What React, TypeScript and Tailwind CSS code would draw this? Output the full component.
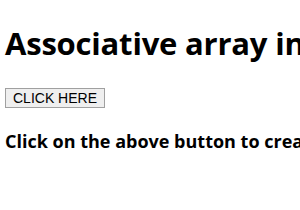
import React from 'react';

const App: React.FC = () => {
  return (
    <div className="min-h-screen w-[300px] overflow-hidden bg-white px-[5px] pt-[22px] text-black" style={{ fontFamily: '"Open Sans", "Noto Sans", sans-serif' }}>
      <h1 className="whitespace-nowrap text-[31px] font-bold leading-[42px] tracking-[-0.2px]">
        Associative array in JavaScript
      </h1>
      <button className="mt-[24px] block h-[20px] border border-[#a0a0a0] bg-[#efefef] px-[7px] text-[14px] leading-[18px] text-black" style={{ fontFamily: '"Liberation Sans", Arial, sans-serif' }}>
        CLICK HERE
      </button>
      <p className="mt-[21px] whitespace-nowrap text-[18px] font-bold leading-[24px]">
        Click on the above button to create an associative array
      </p>
    </div>
  );
};

export default App;
